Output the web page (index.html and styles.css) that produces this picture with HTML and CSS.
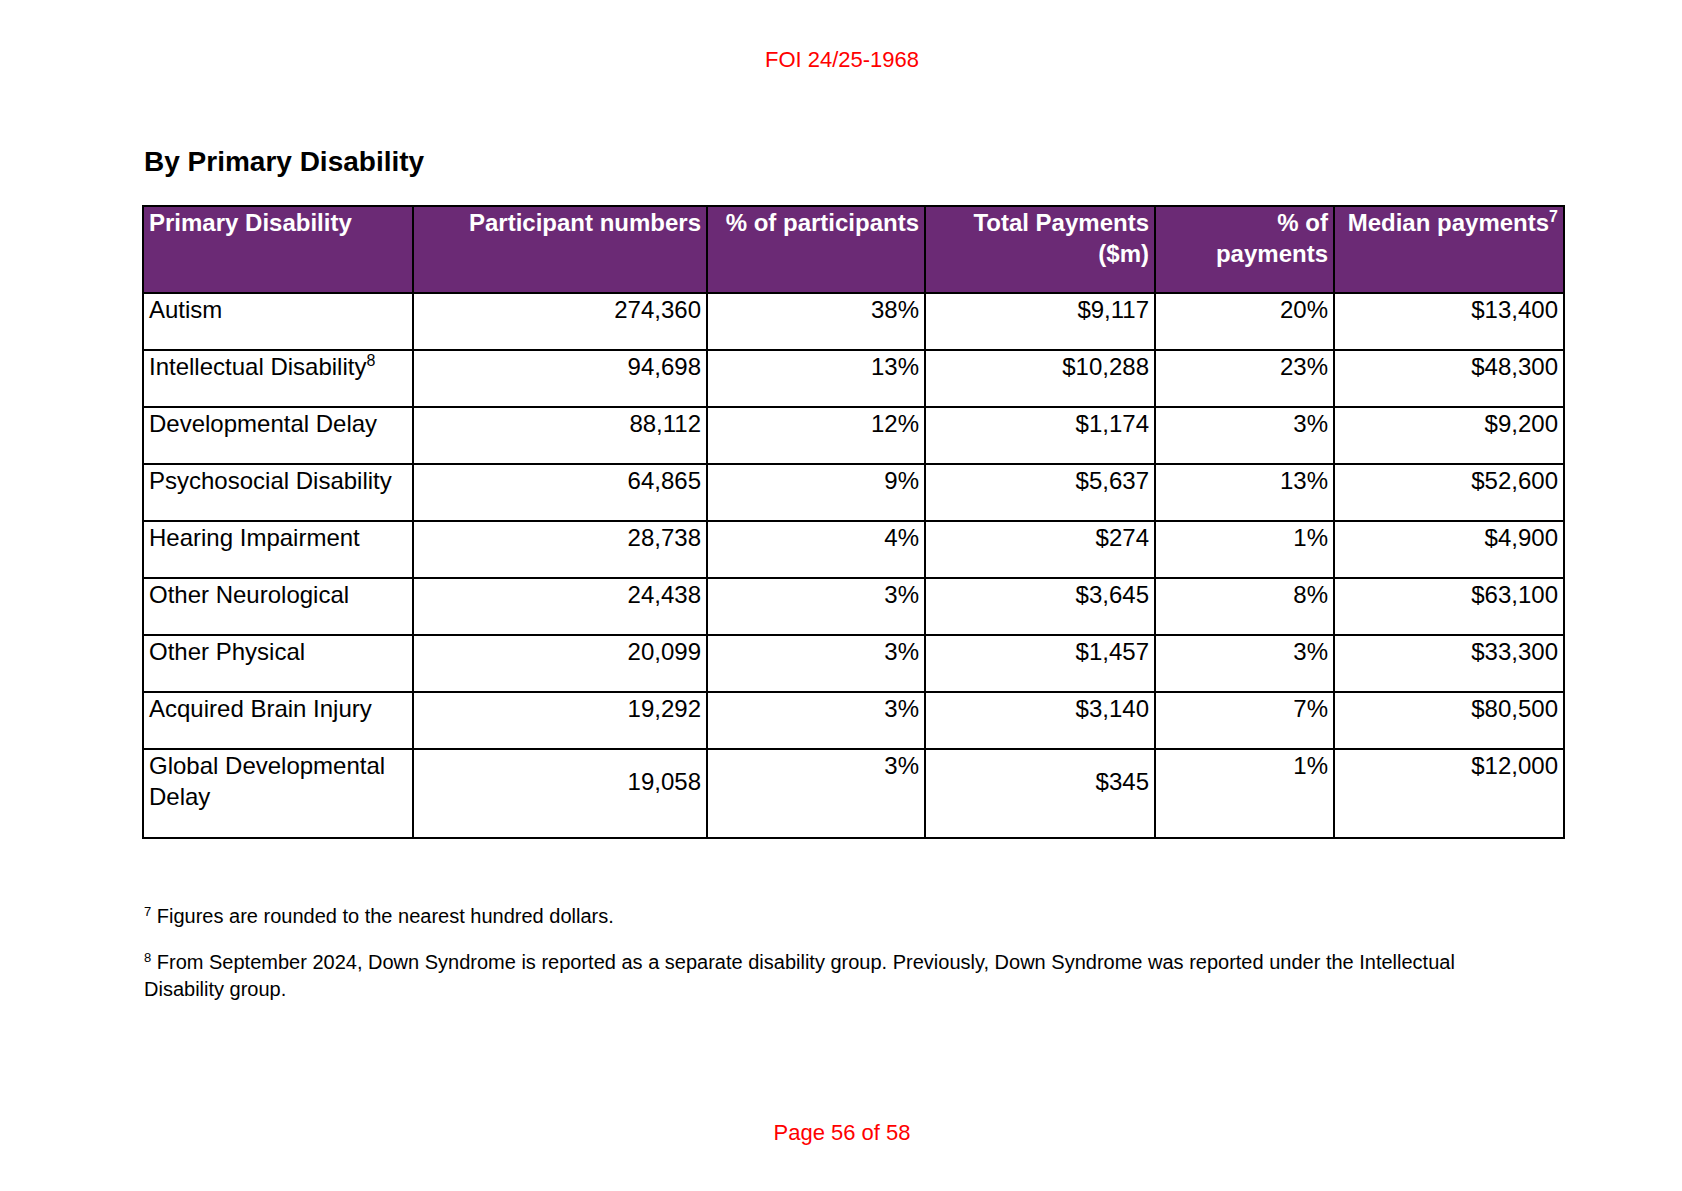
FILE: index.html
```html
<!DOCTYPE html>
<html lang="en">
<head>
<meta charset="utf-8">
<title>FOI 24/25-1968 – By Primary Disability</title>
<link rel="stylesheet" href="styles.css">
</head>
<body>
<div class="page">
  <header class="foi">FOI 24/25-1968</header>
  <main class="content">
    <h2 class="heading">By Primary Disability</h2>
    <table class="data">
      <colgroup>
        <col class="c1"><col class="c2"><col class="c3"><col class="c4"><col class="c5"><col class="c6">
      </colgroup>
      <thead>
        <tr>
          <th class="left">Primary Disability</th>
          <th>Participant numbers</th>
          <th>% of participants</th>
          <th>Total Payments<br>($m)</th>
          <th>% of<br>payments</th>
          <th>Median payments<sup>7</sup></th>
        </tr>
      </thead>
      <tbody>
        <tr><td class="left">Autism</td><td>274,360</td><td>38%</td><td>$9,117</td><td>20%</td><td>$13,400</td></tr>
        <tr><td class="left">Intellectual Disability<sup>8</sup></td><td>94,698</td><td>13%</td><td>$10,288</td><td>23%</td><td>$48,300</td></tr>
        <tr><td class="left">Developmental Delay</td><td>88,112</td><td>12%</td><td>$1,174</td><td>3%</td><td>$9,200</td></tr>
        <tr><td class="left">Psychosocial Disability</td><td>64,865</td><td>9%</td><td>$5,637</td><td>13%</td><td>$52,600</td></tr>
        <tr><td class="left">Hearing Impairment</td><td>28,738</td><td>4%</td><td>$274</td><td>1%</td><td>$4,900</td></tr>
        <tr><td class="left">Other Neurological</td><td>24,438</td><td>3%</td><td>$3,645</td><td>8%</td><td>$63,100</td></tr>
        <tr><td class="left">Other Physical</td><td>20,099</td><td>3%</td><td>$1,457</td><td>3%</td><td>$33,300</td></tr>
        <tr><td class="left">Acquired Brain Injury</td><td>19,292</td><td>3%</td><td>$3,140</td><td>7%</td><td>$80,500</td></tr>
        <tr class="tall"><td class="left">Global Developmental<br>Delay</td><td class="mid">19,058</td><td>3%</td><td class="mid">$345</td><td>1%</td><td>$12,000</td></tr>
      </tbody>
    </table>
    <div class="notes">
      <p class="note"><sup>7</sup> Figures are rounded to the nearest hundred dollars.</p>
      <p class="note"><sup>8</sup> From September 2024, Down Syndrome is reported as a separate disability group. Previously, Down Syndrome was reported under the Intellectual<br>Disability group.</p>
    </div>
  </main>
  <footer class="pageno">Page 56 of 58</footer>
</div>
</body>
</html>
```
FILE: styles.css
```css
html, body {
  margin: 0;
  padding: 0;
  background: #ffffff;
}

body {
  font-family: "Liberation Sans", Arial, sans-serif;
  color: #000000;
}

.page {
  width: 1682px;
  height: 1191px;
  display: flex;
  flex-direction: column;
  overflow: hidden;
}

.foi {
  margin-top: 47px;
  text-align: center;
  color: #ff0000;
  font-size: 22px;
  line-height: 26px;
  padding-left: 2px;
}

.content {
  padding: 0 117px 0 142px;
}

.heading {
  margin: 73px 0 0 2px;
  font-size: 28px;
  line-height: 32px;
  font-weight: bold;
}

.data {
  margin-top: 27px;
  width: 1423px;
  border-collapse: collapse;
  table-layout: fixed;
  font-size: 24px;
  line-height: 31px;
}

.c1 { width: 270px; }
.c2 { width: 294px; }
.c3 { width: 218px; }
.c4 { width: 230px; }
.c5 { width: 179px; }
.c6 { width: 230px; }

.data th,
.data td {
  border: 2px solid #000000;
  padding: 0 5px 24px 5px;
  text-align: right;
  vertical-align: top;
}

.data th {
  background: #6b2a75;
  color: #ffffff;
  font-weight: bold;
  padding-bottom: 23px;
}

.data .tall td {
  padding-bottom: 25px;
}

.data .left {
  text-align: left;
}

.data td.mid {
  vertical-align: middle;
}

.data sup {
  font-size: 16px;
  line-height: 0;
  vertical-align: 9px;
}

.notes {
  margin-top: 64px;
}

.note {
  margin: 0 0 19px 0;
  font-size: 20px;
  line-height: 27px;
  padding-left: 2px;
}

.note sup {
  font-size: 13px;
  line-height: 0;
  vertical-align: 7px;
}

.pageno {
  margin-top: auto;
  margin-bottom: 45px;
  text-align: center;
  color: #ff0000;
  font-size: 22px;
  line-height: 26px;
  padding-left: 2px;
}
```
